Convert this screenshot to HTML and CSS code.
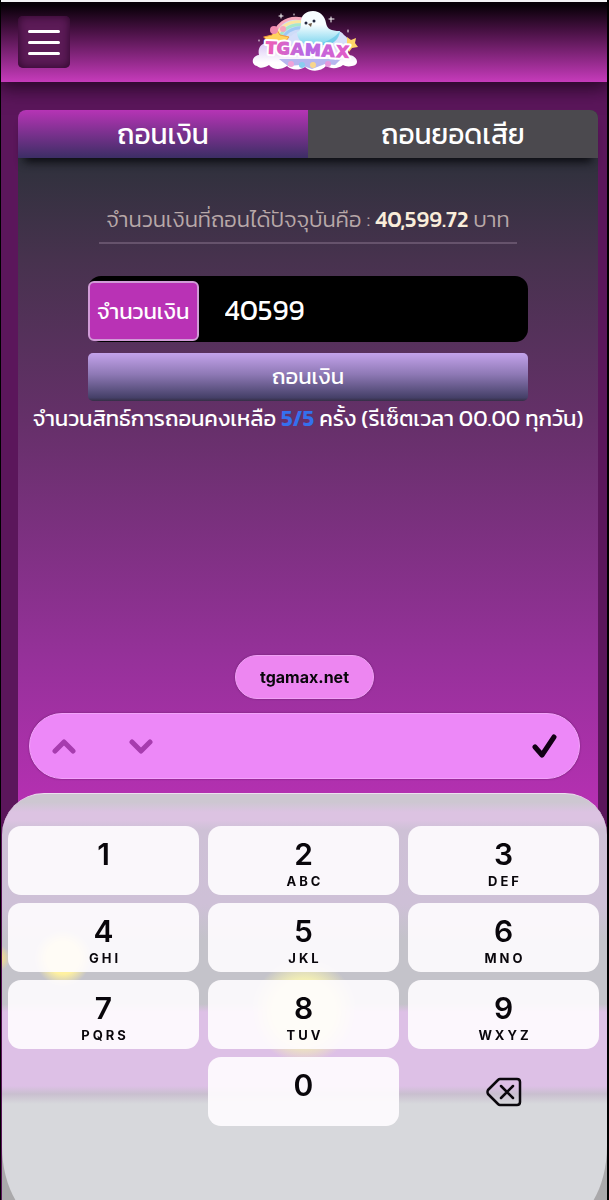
FILE: index.html
```html
<!DOCTYPE html>
<html lang="th">
<head>
<meta charset="utf-8">
<meta name="viewport" content="width=device-width, initial-scale=1">
<title>TGAMAX</title>
<link rel="stylesheet" href="styles.css">
</head>
<body>
<header class="topbar">
  <button class="menu" type="button" aria-label="เมนู"><span></span><span></span><span></span></button>
  <a class="logo" href="#" aria-label="TGAMAX">
    <svg width="112" height="64" viewBox="-4 4 112 64">
      <defs>
        <linearGradient id="word" x1="0" x2="1"><stop offset="0" stop-color="#f05fb4"/><stop offset=".5" stop-color="#b56be6"/><stop offset="1" stop-color="#e65cc4"/></linearGradient>
        <linearGradient id="bird" x1="0" x2="0" y1="0" y2="1"><stop offset=".4" stop-color="#f7fdff"/><stop offset="1" stop-color="#7bd5ee"/></linearGradient>
        <linearGradient id="cloud" x1="0" x2="0" y1="0" y2="1"><stop offset="0" stop-color="#d9c6f5"/><stop offset=".7" stop-color="#fff"/></linearGradient>
      </defs>
      <path d="M16 40C20 22 34 10 50 12l4 28z" fill="#cfdcf8"/>
      <g fill="none" stroke-width="3">
        <path d="M20 37C22 18 35 10 50 13" stroke="#f7a8bd"/>
        <path d="M23 37C25 21 37 14 51 16" stroke="#fbe6a0"/>
        <path d="M26 37C28 24 39 17 52 19" stroke="#a5e8c9"/>
        <path d="M29 37C31 27 41 20 53 22" stroke="#9fc8f5"/>
      </g>
      <path d="M33 40q-2-9 6-10 5-6 11-1l30-3q8-3 12 3 6 3 4 12z" fill="#d6dffa"/>
      <path d="M49 16C49 9 54 5 61 5s12 5 13 12c1 6 5 8 14 8 0 8-7 14-16 14H57c-8-1-12-7-12-13 3 0 4-4 4-10z" fill="url(#bird)"/>
      <path d="M58 37c11 2 22-2 30-12-1 8-7 14-16 14H61z" fill="#58bfe3" opacity=".6"/>
      <circle cx="54" cy="17" r="1.500" fill="#20263d"/><circle cx="62" cy="15" r="1.500" fill="#20263d"/>
      <path d="M56 18l4-1-1 4z" fill="#6d5a4a"/>
      <path d="M12 31l8-2 5-5 3 5 9 2-4 5 1 6-9-2-9 2 1-6z" fill="#ffd35d" stroke="#f49a3e"/>
      <circle cx="22" cy="24" r="4" fill="#f08bb0"/><circle cx="31" cy="23" r="3" fill="#f6a4bd"/>
      <path d="M95 31l4 3 5-2-1 5 3 4-6 1-3 4-2-5z" fill="#ffd568"/>
      <path d="M5 60c-6-1-6-10 2-11-2-8 4-14 10-11l76 2c5 2 3 7 2 9 10-1 14 10 5 11-4 1-7 0-9-1-5 4-12 4-17 1-5 6-16 6-21 1-7 4-14 3-18-1-6 4-14 4-18-1-5 3-9 4-12 1z" fill="url(#cloud)"/>
      <path d="M27 53h62l-6 6-10-1-13 5-12-4-12 1z" fill="#b6b6ef"/>
      <circle cx="39" cy="58" r="3" fill="#f0a3d9"/><circle cx="50" cy="59" r="3" fill="#89cdef"/><circle cx="61" cy="59" r="3" fill="#f7d68c"/><circle cx="76" cy="58" r="3" fill="#e697dc"/>
      <path d="M29 8v4M27 10h4M79 11v5M77 13h5M42 8v1M7 34v1M96 24v2" stroke="#fff"/>
      <text class="wordmark" x="56" y="50" text-anchor="middle" transform="rotate(3 56 43)" fill="url(#word)">TGAMAX</text>
    </svg>
  </a>
</header>

<main class="panel">
  <nav class="tabs">
    <button class="tab tab-active" type="button">ถอนเงิน</button>
    <button class="tab" type="button">ถอนยอดเสีย</button>
  </nav>
  <form class="form">
    <p class="balance">จำนวนเงินที่ถอนได้ปัจจุบันคือ : <strong>40,599.72</strong> บาท</p>
    <div class="field">
      <label class="field-label" for="amount">จำนวนเงิน</label>
      <input class="amount" id="amount" type="text" inputmode="numeric" value="40599">
    </div>
    <button class="submit" type="button">ถอนเงิน</button>
  </form>
  <p class="quota">จำนวนสิทธ์การถอนคงเหลือ <strong>5/5</strong> ครั้ง (รีเซ็ตเวลา 00.00 ทุกวัน)</p>
</main>

<div class="dock">
  <a class="address" href="#">tgamax.net</a>
  <div class="assist">
    <button class="icon" type="button" aria-label="ก่อนหน้า"><svg width="24" height="16" viewBox="0 0 24 16"><path d="M3 13l9-9 9 9" stroke="#a63cae" stroke-width="5"/></svg></button>
    <button class="icon" type="button" aria-label="ถัดไป"><svg width="24" height="16" viewBox="0 0 24 16"><path d="M3 4l9 9 9-9" stroke="#a63cae" stroke-width="5"/></svg></button>
    <button class="icon done" type="button" aria-label="เสร็จ"><svg width="26" height="24" viewBox="0 0 26 24"><path d="M4 13l7 8L23 3" stroke="#120015" stroke-width="5"/></svg></button>
  </div>
  <div class="keyboard">
    <button class="key" type="button">1</button>
    <button class="key" type="button">2<small>ABC</small></button>
    <button class="key" type="button">3<small>DEF</small></button>
    <button class="key" type="button">4<small>GHI</small></button>
    <button class="key" type="button">5<small>JKL</small></button>
    <button class="key" type="button">6<small>MNO</small></button>
    <button class="key" type="button">7<small>PQRS</small></button>
    <button class="key" type="button">8<small>TUV</small></button>
    <button class="key" type="button">9<small>WXYZ</small></button>
    <button class="key key-zero" type="button">0</button>
    <button class="icon" type="button" aria-label="ลบ"><svg width="36" height="30" viewBox="0 0 36 30"><path d="M14 2h17q3 0 3 3v20q0 3-3 3H14q-1 0-2-1L2 17q-1-2 0-4L12 3q1-1 2-1zM15 9l12 12M27 9L15 21" stroke="#0b080d" stroke-width="2.5"/></svg></button>
  </div>
</div>
</body>
</html>
```
FILE: styles.css
```css
* { box-sizing: border-box; }

body {
  margin: 0;
  min-height: 100vh;
  display: flex;
  flex-direction: column;
  border: solid #000;
  border-width: 0 2px 0 1px;
  background: #5b165b;
  color: #fff;
  font-family: Kanit, "Noto Sans Thai", "Open Sans", "Noto Sans", sans-serif;
}

button, input { font: inherit; color: inherit; border: 0; margin: 0; }
button { padding: 0; cursor: pointer; }
a { color: inherit; text-decoration: none; }
p { margin: 0; }
svg { display: block; fill: none; stroke-linecap: round; stroke-linejoin: round; }

.topbar {
  display: grid;
  grid-template-columns: 1fr auto 1fr;
  align-items: center;
  height: 82px;
  padding: 0 17px;
  border-top: 2px solid #f2f2f4;
  background: linear-gradient(#070007 4%, #451041 35%, #c63bbb);
  box-shadow: 0 4px 18px 2px #250624;
}

.menu {
  display: flex;
  flex-direction: column;
  align-items: center;
  justify-content: center;
  gap: 8px;
  width: 52px;
  height: 52px;
  border-radius: 5px;
  background: #5c1b57;
  box-shadow: inset 0 0 10px #2b0629;
}

.menu span { width: 32px; height: 3px; border-radius: 2px; background: #fff; }

.wordmark {
  font: 800 20px Kanit, "Open Sans", sans-serif;
  stroke: #fff;
  stroke-width: 4px;
  paint-order: stroke;
}

.panel {
  flex: 1;
  margin: 28px 9px 0 17px;
  border-radius: 8px 8px 0 0;
  background: linear-gradient(#2f313c 50px, #47324e 150px, #653069 310px, #96319a 550px, #b430b1 690px);
}

.tabs {
  display: grid;
  grid-template-columns: 1fr 1fr;
  height: 48px;
  border-radius: 8px 8px 0 0;
  box-shadow: 0 10px 10px -6px #0b0b10;
  overflow: hidden;
}

.tab { background: #4b494e; font-size: 28px; line-height: 48px; }
.tab-active { background: linear-gradient(#b634b5, #3c2e65); }

.form {
  display: flex;
  flex-direction: column;
  width: 76%;
  margin: 0 auto;
  padding-top: 42px;
}

.balance {
  align-self: center;
  width: 95%;
  padding-bottom: 2px;
  border-bottom: 2px solid #66536c;
  color: #b8a8a8;
  font-size: 22px;
  font-weight: 300;
  line-height: 40px;
  text-align: center;
  white-space: nowrap;
}

.balance strong { color: #f9edda; font-weight: 500; }

.field {
  display: flex;
  height: 66px;
  margin-top: 32px;
  padding: 5px 0 1px;
  border-radius: 13px;
  background: #000;
}

.field-label {
  flex: none;
  width: 111px;
  border: 2px solid #d19bd7;
  border-radius: 6px;
  background: #b932b5;
  font-size: 22px;
  line-height: 58px;
  text-align: center;
}

.amount {
  flex: 1;
  min-width: 0;
  padding: 0 26px 2px;
  background: none;
  font-size: 28px;
  outline: 0;
}

.submit {
  height: 48px;
  margin-top: 11px;
  padding-bottom: 2px;
  border-radius: 5px;
  background: linear-gradient(#c3a3eb, #8d78b4 45%, #454068 93%, #352e45);
  font-size: 22px;
}

.quota {
  font-size: 22px;
  line-height: 36px;
  text-align: center;
  white-space: nowrap;
}

.quota strong { color: #3470ee; font-weight: 600; }

.dock {
  position: fixed;
  right: 2px;
  bottom: -24px;
  left: 2px;
  display: flex;
  flex-direction: column;
  background: linear-gradient(to top, #aaa9ab 120px, transparent 120px);
  color: #09060b;
  font-family: Inter, sans-serif;
}

.address {
  align-self: center;
  padding: 0 24px;
  border: 1px solid #f0a0f5;
  border-radius: 22px;
  background: #ed86f1;
  box-shadow: 0 0 2px #6c1d70;
  font-size: 16px;
  font-weight: 700;
  line-height: 42px;
}

.assist {
  display: flex;
  align-items: center;
  gap: 53px;
  height: 66px;
  margin: 14px 27px;
  padding: 0 22px;
  border: 1px solid #f3a2fb;
  border-radius: 33px;
  background: #ed88f8;
  box-shadow: 0 0 2px #6c1d70;
}

.icon { display: grid; place-items: center; background: none; }
.done { margin-left: auto; }

.keyboard {
  display: grid;
  grid-template-columns: repeat(3, 1fr);
  grid-auto-rows: 69px;
  gap: 8px 9px;
  padding: 32px 8px 98px 6px;
  border-top: 1px solid #ece0ef;
  border-radius: 42px 42px 48px 48px / 42px 42px 78px 78px;
  background:
    radial-gradient(circle at -6px 164px, #f1dc94 6px, #f1dc9400 14px),
    radial-gradient(circle at 61px 164px, #fff1a0 16px, #fff1a000 28px),
    radial-gradient(circle at 302px 217px, #f2eeb5 32px, #f2eeb500 52px),
    linear-gradient(#cdc7d1 8px, #dcc3e2 18px, #dcc3e2 26px, #cec1d6 36px, #cec0d7 110px, #c4c3ca 145px, #c4c3ca 210px, #ddc0e6 218px, #ddc0e6 292px, #c9bfcf 300px, #d7d8dc 310px);
}

.key {
  display: flex;
  flex-direction: column;
  align-items: center;
  padding-top: 10px;
  border-radius: 13px;
  background: rgba(255, 253, 255, .9);
  font-size: 30px;
  font-weight: 600;
  line-height: 36px;
}

.key small {
  padding-left: 3px;
  font-size: 13px;
  font-weight: 700;
  letter-spacing: 3px;
  line-height: 18px;
}

.key-zero { grid-column: 2; }
```
